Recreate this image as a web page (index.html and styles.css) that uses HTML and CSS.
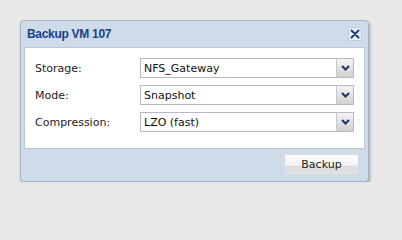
FILE: index.html
```html
<!DOCTYPE html>
<html>
<head>
<meta charset="utf-8">
<link rel="stylesheet" href="styles.css">
</head>
<body>
<div class="win">
  <div class="head">
    <span class="title">Backup VM 107</span>
    <span class="close"><svg width="10" height="10" viewBox="0 0 10 10"><path d="M1.5 1.5 L8.5 8.5 M8.5 1.5 L1.5 8.5" stroke="#1f3f78" stroke-width="2" stroke-linecap="round"/></svg></span>
  </div>
  <div class="body">
    <div class="row">
      <span class="label">Storage:</span>
      <div class="select"><span class="val">NFS_Gateway</span><span class="arrow"><svg width="9" height="6" viewBox="0 0 9 6"><path d="M1 1 L4.5 4.5 L8 1" fill="none" stroke="#1c3466" stroke-width="2"/></svg></span></div>
    </div>
    <div class="row">
      <span class="label">Mode:</span>
      <div class="select"><span class="val">Snapshot</span><span class="arrow"><svg width="9" height="6" viewBox="0 0 9 6"><path d="M1 1 L4.5 4.5 L8 1" fill="none" stroke="#1c3466" stroke-width="2"/></svg></span></div>
    </div>
    <div class="row">
      <span class="label">Compression:</span>
      <div class="select"><span class="val">LZO (fast)</span><span class="arrow"><svg width="9" height="6" viewBox="0 0 9 6"><path d="M1 1 L4.5 4.5 L8 1" fill="none" stroke="#1c3466" stroke-width="2"/></svg></span></div>
    </div>
  </div>
  <div class="foot">
    <button class="btn">Backup</button>
  </div>
</div>
</body>
</html>
```
FILE: styles.css
```css
html, body {
  margin: 0;
  padding: 0;
  background: #e8e8e8;
  font-family: "DejaVu Sans", Verdana, sans-serif;
}
body {
  padding: 20px 0 0 20px;
}
.win {
  width: 349px;
  height: 162px;
  box-sizing: border-box;
  border: 1px solid #a3b3c7;
  border-radius: 4px;
  background: #cfdbe8;
  box-shadow: 1px 2px 3px rgba(0,0,0,0.3);
  display: flex;
  flex-direction: column;
  padding: 0 3px;
}
.head {
  height: 26px;
  display: flex;
  align-items: center;
  justify-content: space-between;
  padding: 0 3px 0 3px;
  flex: none;
}
.title {
  color: #15428b;
  font-weight: bold;
  font-size: 12px;
  letter-spacing: -0.3px;
  font-family: "Liberation Sans", Arial, sans-serif;
}
.close {
  width: 12px;
  height: 12px;
  border: 1px solid #bccde3;
  background: #e6eef8;
  border-radius: 2px;
  display: flex;
  align-items: center;
  justify-content: center;
}
.body {
  background: #fff;
  border: 1px solid #b9c7d8;
  height: 102px;
  box-sizing: border-box;
  padding: 10px 10px 0 10px;
  display: flex;
  flex-direction: column;
  gap: 7px;
  flex: none;
}
.row {
  display: flex;
  align-items: center;
  height: 20px;
}
.label {
  width: 105px;
  font-size: 11px;
  color: #222;
}
.select {
  width: 214px;
  height: 20px;
  box-sizing: border-box;
  border: 1px solid #b5b8c8;
  display: flex;
  align-items: stretch;
  background: #fff;
}
.val {
  flex: 1;
  font-size: 11px;
  color: #111;
  padding-left: 3px;
  display: flex;
  align-items: center;
}
.arrow {
  width: 16px;
  border-left: 1px solid #c6c8d0;
  background: linear-gradient(#f4f4f4, #d0d0d0);
  display: flex;
  align-items: center;
  justify-content: center;
}
.foot {
  flex: 1;
  display: flex;
  justify-content: flex-end;
  align-items: flex-start;
  padding: 6px 7px 0 0;
}
.btn {
  width: 73px;
  height: 19px;
  border: none;
  background: linear-gradient(#fdfdfd 0%, #f2f2f2 55%, #dcdcdc 56%, #e2e2e2 100%);
  font-family: "DejaVu Sans", Verdana, sans-serif;
  font-size: 11px;
  color: #222;
  padding: 0;
}
```
